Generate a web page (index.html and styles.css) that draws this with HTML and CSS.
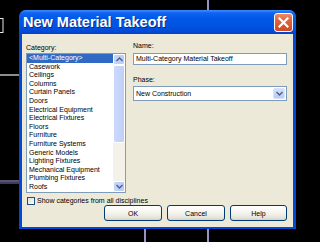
FILE: index.html
```html
<!DOCTYPE html>
<html lang="en">
<head>
    <meta charset="UTF-8">
    <meta name="viewport" content="width=device-width, initial-scale=1.0">
    <title>New Material Takeoff</title>
    <link rel="stylesheet" href="styles.css">
</head>
<body>
    <!-- drawing lines behind the dialog -->
    <svg class="backdrop" width="320" height="242" viewBox="0 0 320 242">
        <rect x="-5" y="18.5" width="8" height="14" fill="none" stroke="#e8e8e8" stroke-width="1"/>
        <line x1="0" y1="75" x2="19" y2="75" stroke="#8c8c8c" stroke-width="2"/>
        <line x1="0" y1="181" x2="19" y2="181" stroke="#b0a8e0" stroke-width="1"/>
        <line x1="0" y1="183" x2="19" y2="183" stroke="#8070c0" stroke-width="1"/>
        <line x1="208" y1="0" x2="208" y2="10" stroke="#9a90c8" stroke-width="2"/>
        <line x1="145" y1="229" x2="145" y2="242" stroke="#9a90c8" stroke-width="2"/>
        <line x1="208" y1="229" x2="208" y2="242" stroke="#9a90c8" stroke-width="2"/>
    </svg>

    <div class="dialog">
        <div class="titlebar">
            <span class="title">New Material Takeoff</span>
            <span class="close">
                <svg width="11" height="11" viewBox="0 0 11 11">
                    <path d="M1.5 1.5 L9.5 9.5 M9.5 1.5 L1.5 9.5" stroke="#fff" stroke-width="2.2" stroke-linecap="square"/>
                </svg>
            </span>
        </div>

        <div class="content">
            <div class="columns">
                <div class="col-left">
                    <div class="label">Category:</div>
                    <div class="listbox">
                        <ul class="items">
                            <li class="selected">&lt;Multi-Category&gt;</li>
                            <li>Casework</li>
                            <li>Ceilings</li>
                            <li>Columns</li>
                            <li>Curtain Panels</li>
                            <li>Doors</li>
                            <li>Electrical Equipment</li>
                            <li>Electrical Fixtures</li>
                            <li>Floors</li>
                            <li>Furniture</li>
                            <li>Furniture Systems</li>
                            <li>Generic Models</li>
                            <li>Lighting Fixtures</li>
                            <li>Mechanical Equipment</li>
                            <li>Plumbing Fixtures</li>
                            <li>Roofs</li>
                            <li>Site</li>
                        </ul>
                        <div class="scrollbar">
                            <div class="sb-btn">
                                <svg width="7" height="5" viewBox="0 0 7 5"><path d="M0.5 4 L3.5 1 L6.5 4" fill="none" stroke="#4d6185" stroke-width="1.4"/></svg>
                            </div>
                            <div class="sb-track">
                                <div class="sb-thumb"></div>
                            </div>
                            <div class="sb-btn">
                                <svg width="7" height="5" viewBox="0 0 7 5"><path d="M0.5 1 L3.5 4 L6.5 1" fill="none" stroke="#4d6185" stroke-width="1.4"/></svg>
                            </div>
                        </div>
                    </div>
                </div>

                <div class="col-right">
                    <div class="label">Name:</div>
                    <div class="textbox">Multi-Category Material Takeoff</div>
                    <div class="label phase-label">Phase:</div>
                    <div class="select">
                        <span class="select-text">New Construction</span>
                        <span class="drop">
                            <svg width="7" height="5" viewBox="0 0 7 5"><path d="M0.5 1 L3.5 4 L6.5 1" fill="none" stroke="#4d6185" stroke-width="1.4"/></svg>
                        </span>
                    </div>
                </div>
            </div>

            <div class="check-row">
                <span class="checkbox"></span>
                <span>Show categories from all disciplines</span>
            </div>

            <div class="buttons">
                <button class="btn">OK</button>
                <button class="btn">Cancel</button>
                <button class="btn btn-help">Help</button>
            </div>
        </div>
    </div>
</body>
</html>
```

FILE: styles.css
```css
body {
    margin: 0;
    background-color: #000;
    font-family: "Liberation Sans", Arial, sans-serif;
    font-size: 7px;
    color: #000;
    width: 320px;
    height: 242px;
    overflow: hidden;
    position: relative;
}
.backdrop {
    position: absolute;
    left: 0;
    top: 0;
}
.dialog {
    position: relative;
    margin-left: 19px;
    top: 10px;
    width: 277px;
    height: 219px;
    background-color: #0048d8;
    border-radius: 7px 7px 0 0;
    display: flex;
    flex-direction: column;
    box-sizing: border-box;
}
.titlebar {
    height: 24px;
    flex-shrink: 0;
    border-radius: 7px 7px 0 0;
    background: linear-gradient(to bottom, #3d8fff 0%, #1064f2 12%, #0058e8 35%, #0054e2 65%, #004bd8 88%, #0042c4 100%);
    display: flex;
    align-items: flex-start;
    justify-content: space-between;
    padding-left: 4px;
    padding-right: 3px;
}
.title {
    font-weight: bold;
    font-size: 14.5px;
    line-height: 24px;
    color: #fff;
    text-shadow: 1px 1px 0 #0a2a8a;
    letter-spacing: 0;
}
.close {
    margin-top: 3px;
    width: 19px;
    height: 19px;
    box-sizing: border-box;
    border: 1px solid #fff;
    border-radius: 3px;
    background: linear-gradient(to bottom, #ee8a66 0%, #e0613c 40%, #cf4a24 100%);
    display: flex;
    align-items: center;
    justify-content: center;
}
.content {
    flex: 1;
    margin: 0 3px 2px 3px;
    background-color: #ece9d8;
    padding: 7px 6px 0 4px;
}
.columns {
    display: flex;
    gap: 7px;
}
.col-left {
    width: 100px;
    margin-top: 2px;
}
.col-right {
    width: 154px;
}
.label {
    height: 9px;
    line-height: 9px;
    margin-bottom: 1px;
}
.col-right .label {
    margin-bottom: 3px;
}
.col-right .phase-label {
    margin-top: 10px;
    margin-bottom: 2px;
}
.listbox {
    height: 140px;
    box-sizing: border-box;
    border: 1px solid #7f9db9;
    background-color: #fff;
    display: flex;
    overflow: hidden;
}
.items {
    flex: 1;
    list-style: none;
    margin: 0;
    padding: 0;
    overflow: hidden;
}
.items li {
    height: 8.6px;
    line-height: 8.6px;
    padding-left: 2px;
    white-space: nowrap;
}
.items li.selected {
    background-color: #316ac5;
    color: #fff;
}
.scrollbar {
    width: 12px;
    display: flex;
    flex-direction: column;
    background-color: #f4f3ee;
}
.sb-btn {
    height: 11px;
    flex-shrink: 0;
    box-sizing: border-box;
    border: 1px solid #fff;
    border-radius: 2px;
    background: linear-gradient(to right, #c6d6fb, #b8cbf6);
    display: flex;
    align-items: center;
    justify-content: center;
}
.sb-track {
    flex: 1;
    background-color: #f3f1ea;
}
.sb-thumb {
    height: 78px;
    box-sizing: border-box;
    border: 1px solid #fff;
    border-radius: 2px;
    background: linear-gradient(to right, #cbdafc, #bfd0f8);
}
.textbox {
    height: 12px;
    box-sizing: border-box;
    border: 1px solid #7f9db9;
    background-color: #fff;
    padding-left: 2px;
    line-height: 10px;
    white-space: nowrap;
}
.select {
    height: 15px;
    box-sizing: border-box;
    border: 1px solid #7f9db9;
    background-color: #fff;
    display: flex;
    align-items: center;
    justify-content: space-between;
    padding-left: 2px;
    padding-right: 1px;
}
.drop {
    width: 12px;
    height: 11px;
    box-sizing: border-box;
    border: 1px solid #d8e3fb;
    border-radius: 2px;
    background: linear-gradient(to bottom, #d4e0fc, #b9ccf6);
    display: flex;
    align-items: center;
    justify-content: center;
}
.check-row {
    margin-top: 3px;
    height: 9px;
    display: flex;
    align-items: center;
    gap: 2px;
    white-space: nowrap;
}
.checkbox {
    width: 8px;
    height: 8px;
    margin-left: 1px;
    box-sizing: border-box;
    border: 1px solid #1c5180;
    background: linear-gradient(135deg, #dcdbd5, #fff);
}
.buttons {
    display: flex;
    justify-content: flex-end;
    gap: 5px;
}
.btn {
    width: 58px;
    height: 16px;
    padding: 0;
    font-family: "Liberation Sans", Arial, sans-serif;
    font-size: 7px;
    color: #000;
    border: 1px solid #003c74;
    border-radius: 3px;
    background: linear-gradient(to bottom, #ffffff 0%, #f4f3ee 50%, #e6e3d8 85%, #d6d0c0 100%);
}
.btn-help {
    width: 57px;
}
```
